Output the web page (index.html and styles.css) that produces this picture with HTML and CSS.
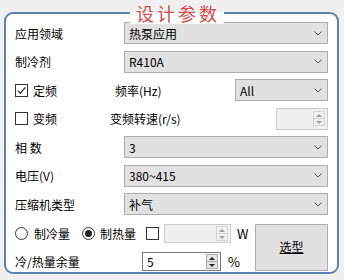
FILE: index.html
```html
<!doctype html>
<html lang="zh-CN">
<head>
	<meta charset="utf-8">
	<title>设计参数</title>
	<link rel="stylesheet" href="styles.css">
</head>
<body>
	<div class="panel">
		<div class="title">设计参数</div>

		<div class="fields">
			<div class="row">
				<span class="label">应用领域</span>
				<div class="combo full"><span>热泵应用</span><svg class="chev" width="8" height="5" viewBox="0 0 8 5"><polyline points="0.5,0.5 4,4 7.5,0.5"/></svg></div>
			</div>
			<div class="row">
				<span class="label">制冷剂</span>
				<div class="combo full"><span>R410A</span><svg class="chev" width="8" height="5" viewBox="0 0 8 5"><polyline points="0.5,0.5 4,4 7.5,0.5"/></svg></div>
			</div>
			<div class="row">
				<span class="opt opt-fixed"><span class="box"><svg width="11" height="11" viewBox="0 0 11 11"><polyline points="1.8,5.6 4.3,8.2 9.4,2.4"/></svg></span>定频</span>
				<span class="sub">频率(Hz)</span>
				<div class="combo short"><span>All</span><svg class="chev" width="8" height="5" viewBox="0 0 8 5"><polyline points="0.5,0.5 4,4 7.5,0.5"/></svg></div>
			</div>
			<div class="row">
				<span class="opt opt-var"><span class="box"></span>变频</span>
				<span class="sub">变频转速(r/s)</span>
				<div class="spin off speed"><span class="val"></span><span class="arrows"><i class="up"></i><i class="down"></i></span></div>
			</div>
			<div class="row">
				<span class="label">相 数</span>
				<div class="combo full"><span>3</span><svg class="chev" width="8" height="5" viewBox="0 0 8 5"><polyline points="0.5,0.5 4,4 7.5,0.5"/></svg></div>
			</div>
			<div class="row">
				<span class="label">电压(V)</span>
				<div class="combo full"><span>380~415</span><svg class="chev" width="8" height="5" viewBox="0 0 8 5"><polyline points="0.5,0.5 4,4 7.5,0.5"/></svg></div>
			</div>
			<div class="row">
				<span class="label">压缩机类型</span>
				<div class="combo full"><span>补气</span><svg class="chev" width="8" height="5" viewBox="0 0 8 5"><polyline points="0.5,0.5 4,4 7.5,0.5"/></svg></div>
			</div>
		</div>

		<div class="bottom">
			<div class="row">
				<span class="radio r-cool"><span class="dot"></span>制冷量</span>
				<span class="radio r-heat on"><span class="dot"></span>制热量</span>
				<span class="box"></span>
				<div class="spin off power"><span class="val"></span><span class="arrows"><i class="up"></i><i class="down"></i></span></div>
				<span class="unit">W</span>
			</div>
			<button class="go"><u>选型</u></button>
			<div class="row">
				<span class="label margin-label">冷/热量余量</span>
				<div class="spin margin"><span class="val">5</span><span class="arrows"><i class="up"></i><i class="down"></i></span></div>
				<span class="unit pct">%</span>
			</div>
		</div>
	</div>
</body>
</html>
```

FILE: styles.css
```css
* {
	box-sizing: border-box;
}

body {
	margin: 0;
	width: 344px;
	height: 280px;
	overflow: hidden;
	background: #f0f0f0;
	font-family: "Noto Sans CJK SC", "Noto Sans", sans-serif;
	font-size: 12px;
	color: #000;
}

.panel {
	position: relative;
	margin: 12px 0 0 4px;
	width: 335px;
	height: 262px;
	background: #fff;
	border: 2px solid #5a84ad;
	border-radius: 9px;
	padding: 8px 9px 0 9px;
}

.title {
	position: absolute;
	top: -12px;
	left: 124px;
	padding: 0 4px 0 6px;
	font-size: 18px;
	line-height: 22px;
	letter-spacing: 3px;
	color: #d24c4c;
	background: linear-gradient(#f0f0f0 10px, #fff 10px);
}

.fields {
	display: grid;
	grid-auto-rows: 22px;
	row-gap: 6.5px;
}

.row {
	display: flex;
	align-items: center;
	white-space: nowrap;
}

.label {
	width: 109px;
}

/* combo boxes */
.combo {
	display: flex;
	align-items: center;
	justify-content: space-between;
	height: 22px;
	background: #e1e1e1;
	border: 1px solid #adadad;
	padding: 0 5px 0 4px;
}

.combo.full {
	width: 204px;
}

.combo.short {
	width: 93px;
}

.chev polyline {
	fill: none;
	stroke: #555;
	stroke-width: 1;
}

/* check boxes and radios */
.box {
	display: inline-flex;
	align-items: center;
	justify-content: center;
	width: 13px;
	height: 13px;
	border: 1px solid #333;
	background: #fff;
}

.box polyline {
	fill: none;
	stroke: #222;
	stroke-width: 1.2;
}

.opt {
	display: flex;
	align-items: center;
	gap: 5px;
}

.opt-fixed {
	width: 100px;
}

.opt-var {
	width: 95px;
}

.sub {
	flex: 1;
}

.radio {
	display: flex;
	align-items: center;
	gap: 6px;
}

.radio .dot {
	display: inline-flex;
	align-items: center;
	justify-content: center;
	width: 13px;
	height: 13px;
	border: 1px solid #333;
	border-radius: 50%;
}

.radio.on .dot::after {
	content: "";
	width: 7px;
	height: 7px;
	border-radius: 50%;
	background: #222;
}

.r-cool {
	margin-right: 12px;
}

.r-heat {
	gap: 5px;
	margin-right: 10px;
}

/* spin boxes */
.spin {
	display: flex;
	align-items: center;
	justify-content: space-between;
	background: #fff;
	border: 1px solid #7a7a7a;
	padding: 0 2px 0 4px;
}

.spin.off {
	background: #f0f0f0;
	border-color: #ccc;
}

.spin .arrows {
	display: flex;
	flex-direction: column;
}

.spin i {
	display: flex;
	align-items: center;
	justify-content: center;
	width: 12px;
	height: 8px;
	background: #e5e5e5;
	border: 1px solid #adadad;
}

.spin i.down {
	margin-top: -1px;
}

.spin i::after {
	content: "";
	border-left: 3px solid transparent;
	border-right: 3px solid transparent;
}

.spin i.up::after {
	border-bottom: 3px solid #222;
}

.spin i.down::after {
	border-top: 3px solid #222;
}

.spin.off i {
	background: #f0f0f0;
	border-color: #d5d5d5;
}

.spin.off i.up::after {
	border-bottom-color: #a0a0a0;
}

.spin.off i.down::after {
	border-top-color: #a0a0a0;
}

.spin.speed {
	width: 52px;
	height: 22px;
}

.spin.power {
	width: 67px;
	height: 19px;
	margin-left: 5px;
}

.spin.margin {
	width: 79px;
	height: 19px;
}

.margin-label {
	width: 127px;
}

.unit {
	margin-left: 6px;
	font-size: 13px;
}

.pct {
	margin-left: 7px;
}

/* bottom block */
.bottom {
	display: grid;
	grid-template-columns: 1fr 73px;
	grid-template-rows: 19px 19px;
	row-gap: 9px;
	margin-top: 9px;
}

.go {
	grid-column: 2;
	grid-row: 1 / 3;
	background: #e1e1e1;
	border: 1px solid #adadad;
	font-family: inherit;
	font-size: 12px;
	color: #000;
	padding: 0 0 3px;
}
```
